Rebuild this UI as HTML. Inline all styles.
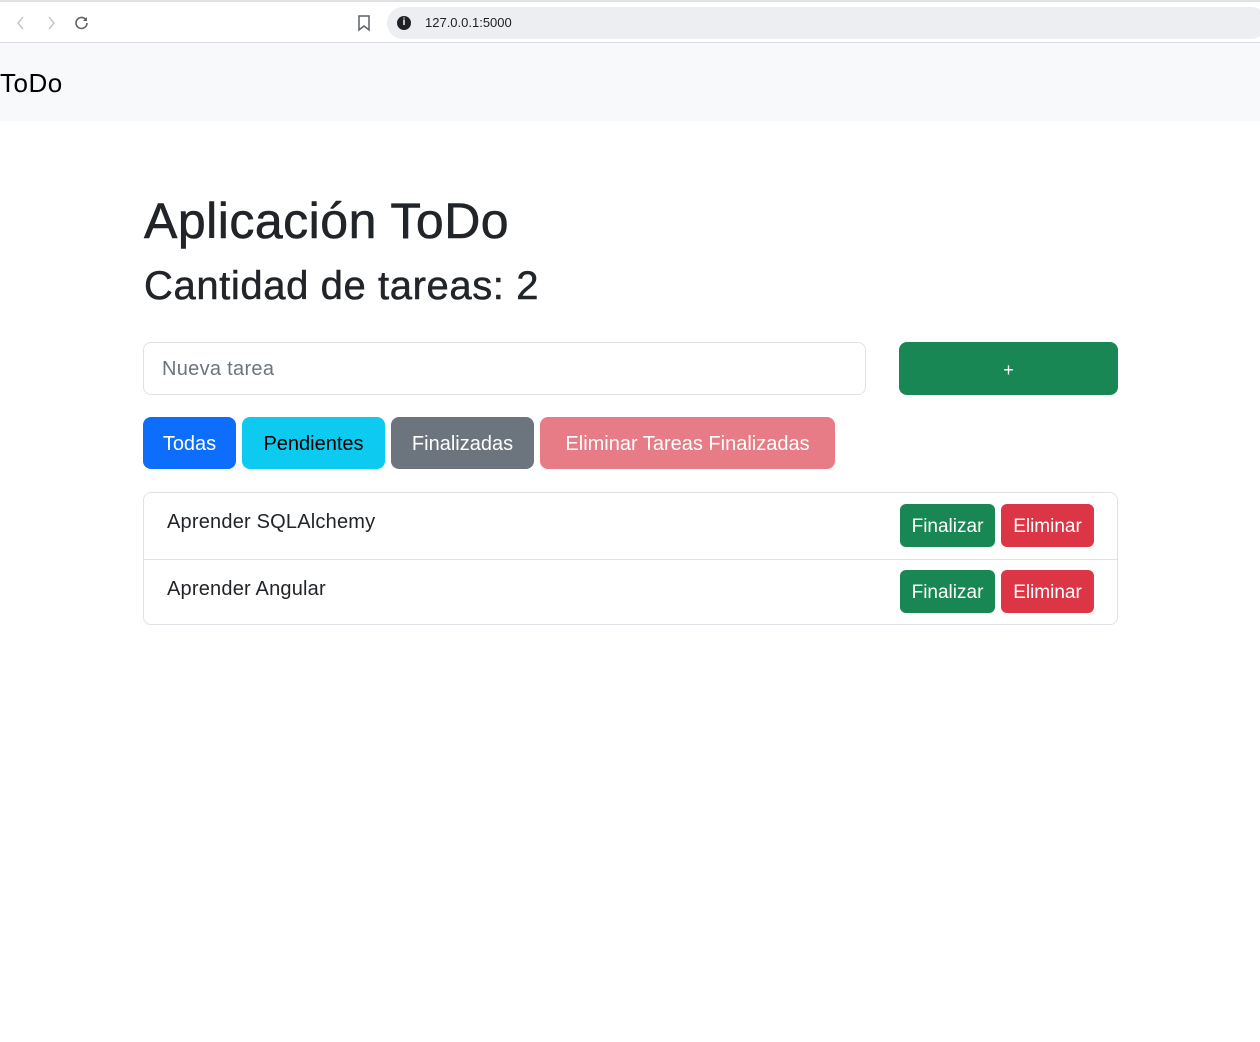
<!DOCTYPE html>
<html><head><meta charset="utf-8"><style>
*{box-sizing:border-box;margin:0;padding:0}
body{width:1260px;height:1042px;background:#fff;font-family:"Liberation Sans",sans-serif;color:#212529;position:relative;overflow:hidden}
.chrome{position:absolute;left:0;top:0;width:1260px;height:43px;background:#fff;border-top:2px solid #dfe1e5;border-bottom:1px solid #dadce0}
.url{position:absolute;left:387px;top:5px;width:880px;height:32px;background:#edeef2;border-radius:16px;font-size:13px;color:#202124;line-height:32px;padding-left:38px}
.url:before{content:"i";position:absolute;left:10px;top:9px;width:14px;height:14px;border-radius:50%;background:#202124;color:#fff;font-size:10px;line-height:14px;text-align:center;font-weight:bold}
.nav{position:absolute;top:43px;left:0;width:1260px;height:78px;background:#f8f9fa}
.brand{position:absolute;left:0;top:68px;font-size:26px;color:#000;letter-spacing:0.5px}
h1{position:absolute;left:144px;top:192px;font-size:50px;font-weight:500;letter-spacing:0.5px;-webkit-text-stroke:0.6px #212529}
h2{position:absolute;left:144px;top:264px;font-size:40px;font-weight:500;letter-spacing:0.6px;-webkit-text-stroke:0.5px #212529}
.inp{position:absolute;left:143px;top:342px;width:723px;height:53px;border:1px solid #dee2e6;border-radius:8px;font-size:20px;color:#6c757d;padding:15px 18px;letter-spacing:0.3px}
.add{position:absolute;left:899px;top:342px;width:219px;height:53px;background:#198754;border-radius:8px;color:#fff;text-align:center;line-height:57px;font-size:18px}
.b{position:absolute;top:417px;height:52px;border-radius:8px;font-size:20px;line-height:54px;text-align:center}
.list{position:absolute;left:143px;top:492px;width:975px;height:133px;border:1px solid #dee2e6;border-radius:8px}
.row{height:66px;position:relative;font-size:20px;padding:18px 23px;letter-spacing:0.2px}
.row+.row{border-top:1px solid #dee2e6}
.s{position:absolute;top:11px;height:43px;border-radius:6px;color:#fff;font-size:19px;line-height:45px;text-align:center;letter-spacing:0}
.row+.row .s{top:10px}
</style></head><body>
<div class="chrome">
<svg style="position:absolute;left:16px;top:14px" width="10" height="14"><path d="M7 1L2 7l5 6" fill="none" stroke="#c4c7cc" stroke-width="1.5"/></svg>
<svg style="position:absolute;left:46px;top:14px" width="10" height="14"><path d="M3 1l5 6-5 6" fill="none" stroke="#c4c7cc" stroke-width="1.5"/></svg>
<svg style="position:absolute;left:73px;top:12px" width="18" height="18"><path d="M14 9a5.5 5.5 0 1 1-1.6-3.9" fill="none" stroke="#5f6368" stroke-width="1.6"/><path d="M14 3v4h-4z" fill="#5f6368"/></svg>
<svg style="position:absolute;left:357px;top:13px" width="14" height="17"><path d="M2 1h10v14l-5-4-5 4z" fill="none" stroke="#5f6368" stroke-width="1.5"/></svg>
<div class="url">127.0.0.1:5000</div>
</div>
<div class="nav"></div>
<div class="brand">ToDo</div>
<h1>Aplicación ToDo</h1>
<h2>Cantidad de tareas: 2</h2>
<div class="inp">Nueva tarea</div>
<div class="add">+</div>
<div class="b" style="left:143px;width:93px;background:#0d6efd;color:#fff">Todas</div>
<div class="b" style="left:242px;width:143px;background:#0dcaf0;color:#000">Pendientes</div>
<div class="b" style="left:391px;width:143px;background:#6c757d;color:#fff">Finalizadas</div>
<div class="b" style="left:540px;width:295px;background:#e77c86;color:#fff">Eliminar Tareas Finalizadas</div>
<div class="list">
<div class="row">Aprender SQLAlchemy<div class="s" style="left:756px;width:95px;background:#198754">Finalizar</div><div class="s" style="left:857px;width:93px;background:#dc3545">Eliminar</div></div>
<div class="row">Aprender Angular<div class="s" style="left:756px;width:95px;background:#198754">Finalizar</div><div class="s" style="left:857px;width:93px;background:#dc3545">Eliminar</div></div>
</div>
</body></html>
